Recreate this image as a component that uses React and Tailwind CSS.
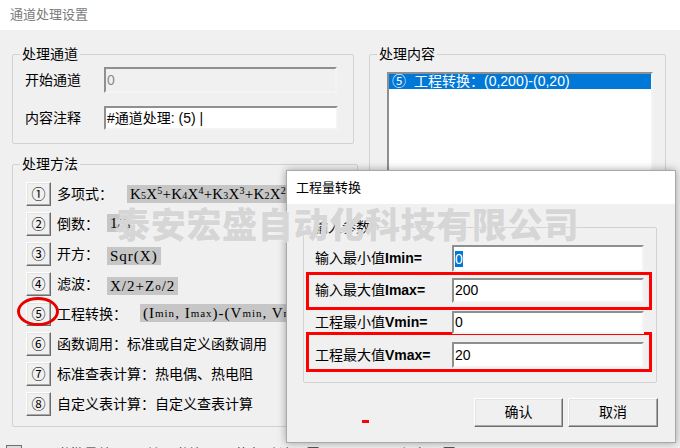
import React from 'react';

const cjk = "font-['Liberation_Sans','Noto_Sans_CJK_SC',sans-serif]";
const serif = "font-['Liberation_Serif','Noto_Sans_CJK_SC',serif]";

function Field({ value, disabled, className = '', selected }) {
  return (
    <div
      className={`flex items-center border-2 border-t-[#8f8f8f] border-l-[#8f8f8f] border-r-[#f4f4f4] border-b-[#f4f4f4] pl-[1px] text-[14px] ${disabled ? 'bg-[#f0f0f0] text-[#8a8a8a]' : 'bg-white text-black'} ${className}`}>
      {selected ? <span className="bg-[#0078d7] text-white leading-[16px]">{value}</span> : value}
    </div>
  );
}

function RaisedButton({ children, className = '' }) {
  return (
    <div
      className={`flex items-center justify-center border border-t-white border-l-white border-r-[#6e6e6e] border-b-[#6e6e6e] bg-[#f0f0f0] shadow-[inset_-1px_-1px_0_#a8a8a8,inset_1px_1px_0_#e3e3e3] text-[14px] text-black ${className}`}>
      {children}
    </div>
  );
}

function Formula({ children, className = '' }) {
  return (
    <div className={`flex h-[18px] items-center bg-[#c6c6c6] px-[3px] text-[15px] leading-none text-black ${serif} ${className}`}>
      {children}
    </div>
  );
}

const methods = [
  { n: '①', label: '多项式：', gap: 'ml-[14px]', formula: (
    <Formula className="mt-[3px] w-[230px] tracking-[0.2px]">
      K<sub className="text-[10px] relative top-[2px]">5</sub>X<sup className="text-[10px] relative -top-[3px]">5</sup>+K<sub className="text-[10px] relative top-[2px]">4</sub>X<sup className="text-[10px] relative -top-[3px]">4</sup>+K<sub className="text-[10px] relative top-[2px]">3</sub>X<sup className="text-[10px] relative -top-[3px]">3</sup>+K<sub className="text-[10px] relative top-[2px]">2</sub>X<sup className="text-[10px] relative -top-[3px]">2</sup>+K<sub className="text-[10px] relative top-[2px]">1</sub>X+K<sub className="text-[10px] relative top-[2px]">0</sub>
    </Formula>
  ) },
  { n: '②', label: '倒数：', gap: 'ml-[8px]', formula: <Formula className="mt-[2px] w-[28px]">1/X</Formula> },
  { n: '③', label: '开方：', gap: 'ml-[8px]', formula: <Formula className="mt-[5px] tracking-[1px]">Sqr(X)</Formula> },
  { n: '④', label: '滤波：', gap: 'ml-[8px]', formula: <Formula className="mt-[5px] tracking-[1px]">X/2+Z<span className="text-[11px]">o</span>/2</Formula> },
  { n: '⑤', label: '工程转换：', gap: 'ml-[13px]', formula: (
    <Formula className="mt-[2px] w-[180px] tracking-[1px]">
      (I<span className="text-[11px]">min</span>, I<span className="text-[11px]">max</span>)-(V<span className="text-[11px]">min</span>, V<span className="text-[11px]">max</span>)
    </Formula>
  ) },
  { n: '⑥', label: '函数调用：标准或自定义函数调用' },
  { n: '⑦', label: '标准查表计算：热电偶、热电阻' },
  { n: '⑧', label: '自定义表计算：自定义查表计算' },
];

function ParamRow({ label, sym, value, red, className = '', inputClass = '', selected }) {
  return (
    <div
      className={`flex items-center ${red ? 'ml-[2px] mr-[4px] border-[3px] border-[#ff0000] pl-[6px] pr-[5px]' : 'pl-[11px] pr-[12px]'} ${className}`}>
      <div className="w-[137px] shrink-0 text-[14px] text-black">
        {label}<span className="font-bold">{sym}</span>
      </div>
      <Field value={value} className={`flex-1 ${inputClass}`} selected={selected} />
    </div>
  );
}

export default function App() {
  return (
    <div className={`relative h-[448px] w-[680px] overflow-hidden bg-[#f0f0f0] ${cjk}`}>
      {/* title bar */}
      <div className="flex h-[30px] items-center bg-white pl-[10px] text-[13px] text-[#7a7a7a]">通道处理设置</div>

      <div className="flex gap-[15px] pl-[12px] pt-[15px]">
        {/* left column */}
        <div className="flex w-[342px] flex-col">
          <fieldset className="h-[99px] rounded-[2px] border border-[#d2d2d2]">
            <legend className="ml-[7px] px-[2px] text-[14px] leading-[18px] text-black">处理通道</legend>
            <div className="flex items-center pl-[12px] pt-[4px]">
              <div className="w-[79px] text-[14px]">开始通道</div>
              <Field value="0" disabled className="h-[26px] w-[233px]" />
            </div>
            <div className="mt-[13px] flex items-center pl-[12px]">
              <div className="w-[79px] text-[14px]">内容注释</div>
              <Field value="#通道处理: (5) |" className="h-[24px] w-[234px]" />
            </div>
          </fieldset>

          <fieldset className="mt-[11px] h-[272px] rounded-[2px] border border-[#d2d2d2]">
            <legend className="ml-[7px] px-[2px] text-[14px] leading-[18px] text-black">处理方法</legend>
            <div className="flex flex-col gap-[6px] pl-[13px] pt-[9px]">
              {methods.map((m) => (
                <div key={m.n} className="flex h-[24px] items-start">
                  <RaisedButton className="h-[24px] w-[25px] shrink-0">{m.n}</RaisedButton>
                  <div className="ml-[6px] shrink-0 whitespace-nowrap text-[14px] leading-[24px]">{m.label}</div>
                  {m.formula && <div className={m.gap}>{m.formula}</div>}
                </div>
              ))}
            </div>
          </fieldset>
        </div>

        {/* right column */}
        <fieldset className="h-[382px] w-[297px] rounded-[2px] border border-[#d2d2d2]">
          <legend className="ml-[7px] px-[2px] text-[14px] leading-[18px] text-black">处理内容</legend>
          <div className="ml-[17px] mt-[9px] h-[330px] w-[266px] border-2 border-t-[#8f8f8f] border-l-[#8f8f8f] border-r-[#f4f4f4] border-b-[#f4f4f4] bg-white">
            <div className="flex h-[15px] items-center whitespace-nowrap bg-[#0078d7] pl-[3px] text-[14px] text-white">
              <span>⑤</span>
              <span className="ml-[8px]">工程转换：(0,200)-(0,20)</span>
            </div>
          </div>
        </fieldset>
      </div>

      {/* clipped row below */}
      <div className="mt-[17px] flex items-start gap-[20px] pl-[6px] text-[14px] text-[#333]">
        <div className="mt-[1px] h-[14px] w-[16px] border border-[#6e6e6e] bg-[#dcdcdc]" />
        <span>通道批量处理</span>
        <span>单通道处理</span>
        <span>恢复默认设置</span>
        <span className="ml-[60px]">保存设置</span>
      </div>

      {/* red ellipse marker */}
      <div className="absolute left-[17px] top-[297px] h-[29px] w-[42px] rounded-[50%] border-[3px] border-[#e60000]" />

      {/* dialog */}
      <div className="absolute left-[286px] top-[170px] flex h-[273px] w-[390px] flex-col border border-[#a9a9a9] bg-[#f0f0f0] shadow-[0_0_8px_rgba(0,0,0,0.35)]">
        <div className="flex h-[33px] items-center bg-white pl-[9px] text-[13px] text-black">工程量转换</div>
        <div className="relative px-[16px] pt-[14px]">
          <fieldset className="w-[354px] rounded-[2px] border border-[#d2d2d2] pb-[10px]">
            <legend className="ml-[8px] px-[2px] text-[14px] leading-[18px] text-black">输入参数</legend>
            <ParamRow label="输入最小值" sym="Imin=" value="0" selected className="mt-[9px]" inputClass="h-[27px]" />
            <ParamRow label="输入最大值" sym="Imax=" value="200" red className="h-[38px] pt-[3px] pb-[4px]" inputClass="h-[25px]" />
            <ParamRow label="工程最小值" sym="Vmin=" value="0" className="mt-[1px]" inputClass="h-[23px]" />
            <ParamRow label="工程最大值" sym="Vmax=" value="20" red className="-mt-[2px] h-[40px] pt-[7px] pb-[1px]" inputClass="h-[26px]" />
          </fieldset>
          <div className="mt-[15px] flex justify-end gap-[5px] pr-[1px]">
            <RaisedButton className="h-[29px] w-[89px]">确认</RaisedButton>
            <RaisedButton className="h-[29px] w-[90px]">取消</RaisedButton>
          </div>
          <div className="absolute left-[75px] top-[216px] h-[3px] w-[7px] bg-[#ff0000]" />
        </div>
      </div>

      {/* watermark */}
      <div className="pointer-events-none absolute left-[115px] top-[201px] whitespace-nowrap text-[35px] font-black leading-[44px] tracking-[0.7px] text-[#d6d6d6] [text-shadow:0_0_2px_#f6f6f6] font-['Noto_Sans_CJK_SC',sans-serif]">
        泰安宏盛自动化科技有限公司
      </div>
    </div>
  );
}
